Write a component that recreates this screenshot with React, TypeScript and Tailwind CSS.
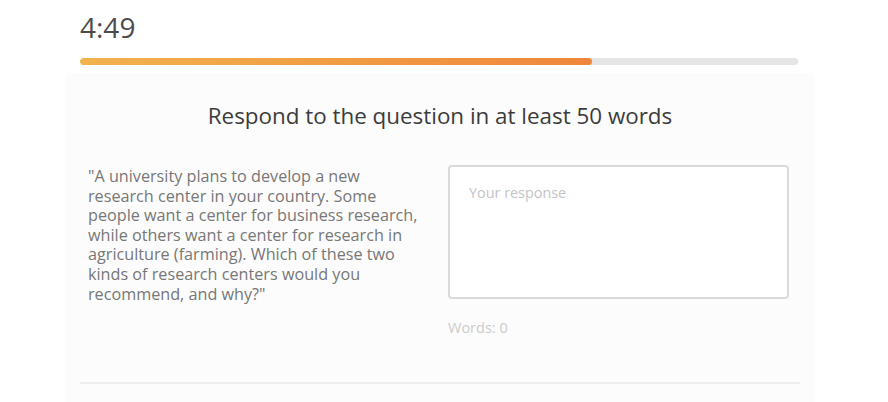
export default function App() {
  const progress = 71.3;
  return (
    <div className="w-[888px] h-[402px] bg-white overflow-hidden" style={{ fontFamily: "'Open Sans', Lato, sans-serif" }}>
      <div className="px-[80px] pt-[9px]">
        <div className="text-[28px] leading-[36px] text-[#4b4b4b]">4:49</div>
        <div className="mt-[13px] h-[7px] w-[718px] rounded-full bg-[#e5e5e5] overflow-hidden">
          <div
            className="h-full rounded-full bg-gradient-to-r from-[#f2b24e] to-[#ee863b]"
            style={{ width: `${progress}%` }}
          />
        </div>
      </div>
      <div className="ml-[65px] w-[750px] bg-[#fcfcfc] h-[330px] mt-[8px] px-[15px]">
        <h1 className="pt-[28px] text-center text-[22.4px] leading-[30px] text-[#3c3c3c]">
          Respond to the question in at least 50 words
        </h1>
        <div className="mt-[34px] flex gap-[20px]">
          <p className="ml-[8px] pt-[2px] w-[340px] text-[16.2px] leading-[19.6px] text-[#777777]">
            "A university plans to develop a new research center in your country. Some people want a center for business
            research, while others want a center for research in agriculture (farming). Which of these two kinds of
            research centers would you recommend, and why?"
          </p>
          <div className="w-[341px]">
            <div className="h-[134px] rounded-[4px] border-2 border-[#dadada] bg-white px-[19px] py-[15px] text-[14.4px] text-[#c4c4c4]">
              Your response
            </div>
            <div className="mt-[18px] text-[14.5px] text-[#cccccc]">Words: 0</div>
          </div>
        </div>
        <div className="mt-[43px] h-[2px] w-[720px] bg-[#eeeeee]" />
      </div>
    </div>
  );
}
